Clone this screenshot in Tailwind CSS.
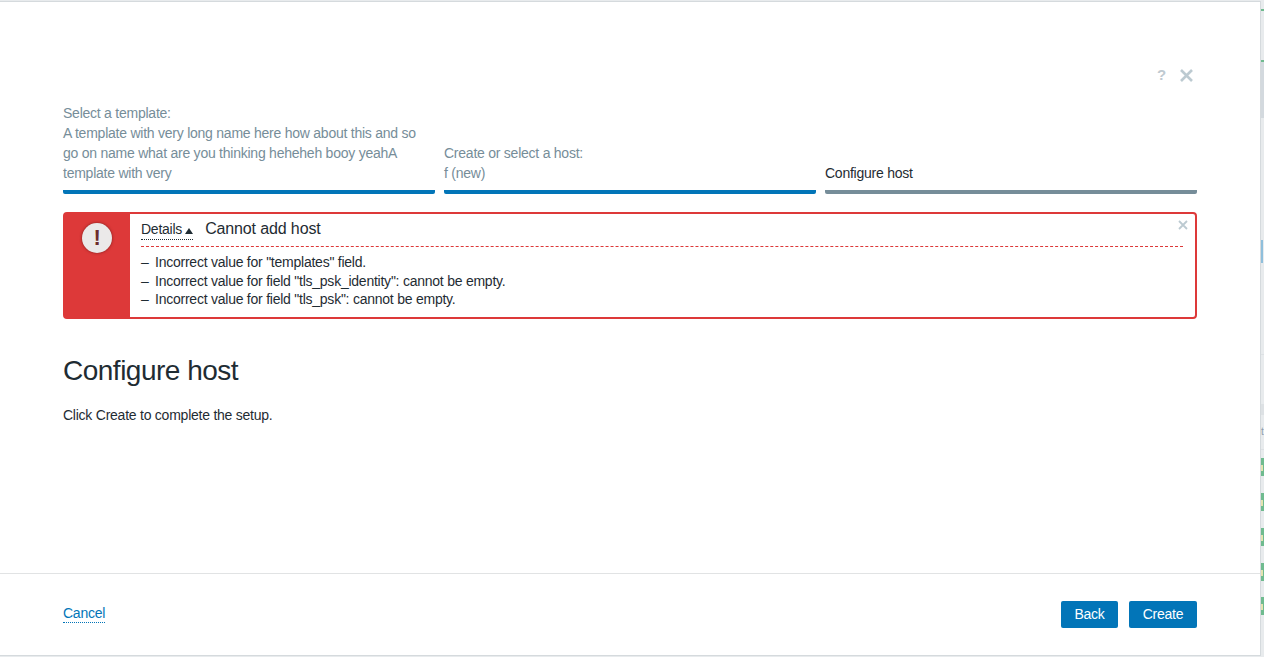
<!DOCTYPE html>
<html lang="en">
<head>
  <meta charset="UTF-8" />
  <title>Create host</title>
  <script src="https://cdn.jsdelivr.net/npm/@tailwindcss/browser@4"></script>
</head>
<body class="bg-[#e8ebed] font-['Liberation_Sans',Arial,sans-serif] text-[14px] leading-5 tracking-[-0.24px] text-[#1f2c33] overflow-hidden">
  <div class="flex h-[657px] w-[1264px]">

    <!-- Modal -->
    <div class="mt-px mb-px w-[1261px] bg-white border-t border-r border-b border-[#d5dadd] flex flex-col">

      <div class="h-[572px] px-[63px] border-b border-[#e1e3e4] flex flex-col">
        <!-- Help / close -->
        <div class="h-[101px] pt-[63px] pr-[3px] flex justify-end items-start gap-[13px]">
          <span class="text-[15px] leading-5 font-bold text-[#bfcad1]">?</span>
          <svg class="w-[15px] h-[15px] mt-[3px]" viewBox="0 0 15 15"><path d="M2 2 L13 13 M13 2 L2 13" stroke="#bccad1" stroke-width="2.6" /></svg>
        </div>

        <!-- Steps -->
        <div class="grid grid-cols-3 gap-[9px] w-[1134px] items-end">
          <div class="text-[#768d99] border-b-[4px] border-[#0275b8] rounded-b-[2px] pb-[7px]">
            <div class="pr-[15px]">Select a template:<br>A template with very long name here how about this and so go on name what are you thinking heheheh booy yeahA template with very</div>
          </div>
          <div class="text-[#768d99] border-b-[4px] border-[#0275b8] rounded-b-[2px] pb-[7px]">Create or select a host:<br>f (new)</div>
          <div class="text-[#1f2c33] border-b-[4px] border-[#768d99] rounded-b-[2px] pb-[7px]">Configure host</div>
        </div>

        <!-- Error box -->
        <div class="mt-[18px] w-[1134px] h-[107px] flex border-2 border-[#dd3939] rounded-[4px] relative">
          <div class="w-[66px] -ml-px bg-[#dd3939] flex justify-center items-start pt-[9px] shrink-0">
            <div class="w-[30px] h-[30px] rounded-full bg-[#ebe9e9] shadow-[0_0_3px_#7a1f1d] flex items-center justify-center text-[#6d2b2b] text-[22px] font-bold">!</div>
          </div>
          <div class="flex-1 pl-[11px] pr-[12px]">
            <div class="h-[33px] pt-[5px] flex items-start border-b border-dashed border-[#dd3939]">
              <span class="border-b border-dotted border-[#1f2c33] leading-[19px] h-[21px] pt-[1px] flex items-center gap-[3px]">Details<svg class="w-[8px] h-[6px] mt-[2px]" viewBox="0 0 8 6"><path d="M4 0 L8 6 L0 6 Z" fill="#1f2c33" /></svg></span>
              <span class="ml-[12px] text-[16px] leading-5 tracking-[-0.13px]">Cannot add host</span>
            </div>
            <ul class="pt-[6px] leading-[18.5px]">
              <li class="flex"><span class="w-[14px]">–</span>Incorrect value for "templates" field.</li>
              <li class="flex"><span class="w-[14px]">–</span>Incorrect value for field "tls_psk_identity": cannot be empty.</li>
              <li class="flex"><span class="w-[14px]">–</span>Incorrect value for field "tls_psk": cannot be empty.</li>
            </ul>
          </div>
          <svg class="absolute top-[6px] right-[7px] w-[10px] h-[10px]" viewBox="0 0 10 10"><path d="M1 1 L9 9 M9 1 L1 9" stroke="#bccad1" stroke-width="1.8" /></svg>
        </div>

        <!-- Content -->
        <h2 class="mt-[35px] text-[28px] leading-[34px] tracking-[-0.5px] text-[#1f2c33]">Configure host</h2>
        <p class="mt-[17px]">Click Create to complete the setup.</p>
      </div>

      <!-- Footer -->
      <div class="flex-1 px-[63px] flex justify-between items-start pt-[27px]">
        <a href="#" class="mt-[4px] text-[#0275b8] border-b border-dotted border-[#0275b8] leading-[17px]">Cancel</a>
        <div class="flex gap-[11px]">
          <button class="h-[27px] w-[57px] pb-[2px] rounded-[2px] bg-[#0275b8] text-white">Back</button>
          <button class="h-[27px] w-[68px] pb-[2px] rounded-[2px] bg-[#0275b8] text-white">Create</button>
        </div>
      </div>
    </div>

    <!-- Page visible behind the modal -->
    <div class="flex-1 flex flex-col overflow-hidden">
      <div class="mt-[9px] h-[2px] shrink-0 bg-[#6fbb8f]"></div>
      <div class="mt-[49px] h-[2px] shrink-0 bg-[#6fbb8f]"></div>
      <div class="h-[56px] shrink-0 bg-[#d3d9de]"></div>
      <div class="mt-[122px] h-[23px] w-[2px] shrink-0 bg-[#8fbfdc]"></div>
      <div class="mt-[91px] h-px shrink-0 bg-[#dde1e4]"></div>
      <div class="mt-[49px] h-[11px] shrink-0 bg-[#dde1e4]"></div>
      <div class="mt-[10px] h-[14px] shrink-0 text-[#8f9daa] text-[10px] tracking-normal leading-[14px]">t</div>
      <div class="mt-[10px] h-px shrink-0 bg-[#dde1e4]"></div>
      <div class="mt-[8px] h-[18px] shrink-0 bg-[#6fbb8f] pt-[7px]"><div class="w-[2px] h-[6px] bg-[#e3e2b0]"></div></div>
      <div class="mt-[17px] h-[18px] shrink-0 bg-[#6fbb8f] pt-[7px]"><div class="w-[2px] h-[6px] bg-[#e3e2b0]"></div></div>
      <div class="mt-[17px] h-[18px] shrink-0 bg-[#6fbb8f] pt-[7px]"><div class="w-[2px] h-[6px] bg-[#e3e2b0]"></div></div>
      <div class="mt-[17px] h-[18px] shrink-0 bg-[#6fbb8f] pt-[7px]"><div class="w-[2px] h-[6px] bg-[#e3e2b0]"></div></div>
      <div class="mt-[16px] h-[18px] shrink-0 bg-[#6fbb8f] pt-[7px]"><div class="w-[2px] h-[6px] bg-[#e3e2b0]"></div></div>
    </div>
  </div>
</body>
</html>
